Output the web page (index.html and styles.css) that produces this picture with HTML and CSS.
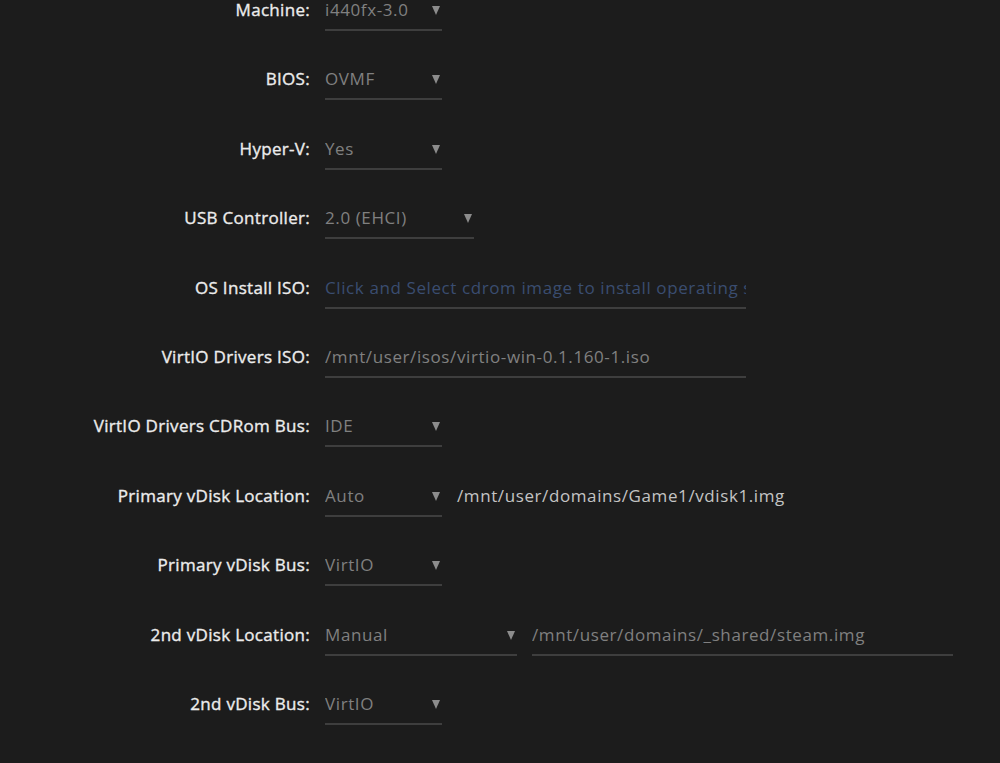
FILE: index.html
```html
<!DOCTYPE html>
<html lang="en">
<head>
    <meta charset="UTF-8">
    <title>VM Settings</title>
    <link rel="stylesheet" href="styles.css">
</head>
<body>
    <form class="vm-form">
        <div class="row">
            <label>Machine:</label>
            <div class="select"><span>i440fx-3.0</span><i class="arrow"></i></div>
        </div>
        <div class="row">
            <label>BIOS:</label>
            <div class="select"><span>OVMF</span><i class="arrow"></i></div>
        </div>
        <div class="row">
            <label>Hyper-V:</label>
            <div class="select"><span>Yes</span><i class="arrow"></i></div>
        </div>
        <div class="row">
            <label>USB Controller:</label>
            <div class="select wide"><span>2.0 (EHCI)</span><i class="arrow"></i></div>
        </div>
        <div class="row">
            <label>OS Install ISO:</label>
            <div class="input placeholder">Click and Select cdrom image to install operating system</div>
        </div>
        <div class="row">
            <label>VirtIO Drivers ISO:</label>
            <div class="input">/mnt/user/isos/virtio-win-0.1.160-1.iso</div>
        </div>
        <div class="row">
            <label>VirtIO Drivers CDRom Bus:</label>
            <div class="select"><span>IDE</span><i class="arrow"></i></div>
        </div>
        <div class="row">
            <label>Primary vDisk Location:</label>
            <div class="select"><span>Auto</span><i class="arrow"></i></div>
            <span class="path">/mnt/user/domains/Game1/vdisk1.img</span>
        </div>
        <div class="row">
            <label>Primary vDisk Bus:</label>
            <div class="select"><span>VirtIO</span><i class="arrow"></i></div>
        </div>
        <div class="row">
            <label>2nd vDisk Location:</label>
            <div class="select manual"><span>Manual</span><i class="arrow"></i></div>
            <div class="input">/mnt/user/domains/_shared/steam.img</div>
        </div>
        <div class="row">
            <label>2nd vDisk Bus:</label>
            <div class="select"><span>VirtIO</span><i class="arrow"></i></div>
        </div>
    </form>
</body>
</html>
```

FILE: styles.css
```css
body {
    margin: 0;
    background: #1c1c1c;
    font-family: 'Open Sans', 'Noto Sans', sans-serif;
    font-size: 17px;
    color: #e6e6e6;
    overflow: hidden;
}

.vm-form {
    margin-top: -23px;
}

.row {
    display: flex;
    align-items: flex-start;
    height: 69.4px;
    gap: 15px;
}

.row label {
    width: 310px;
    flex: none;
    text-align: right;
    padding-top: 22px;
    letter-spacing: 0.3px;
    color: #ececec;
    -webkit-text-stroke: 0.35px #ececec;
    line-height: 22px;
}

.select, .input {
    flex: none;
    position: relative;
    height: 22px;
    padding-top: 22px;
    padding-bottom: 8px;
    line-height: 22px;
    letter-spacing: 0.6px;
    border-bottom: 2px solid #3e3e3e;
    color: #808080;
    white-space: nowrap;
    overflow: hidden;
}

.select {
    width: 117px;
}

.select.wide {
    width: 149px;
}

.select.manual {
    width: 192px;
}

.input {
    width: 421px;
}

.input.placeholder {
    color: #3a4d70;
}

.arrow {
    position: absolute;
    right: 2px;
    top: 29px;
    width: 0;
    height: 0;
    border-left: 4px solid transparent;
    border-right: 4px solid transparent;
    border-top: 9px solid #8c8c8c;
}

.path {
    padding-top: 22px;
    line-height: 22px;
    letter-spacing: 0.6px;
    color: #c4c4c4;
}
```
